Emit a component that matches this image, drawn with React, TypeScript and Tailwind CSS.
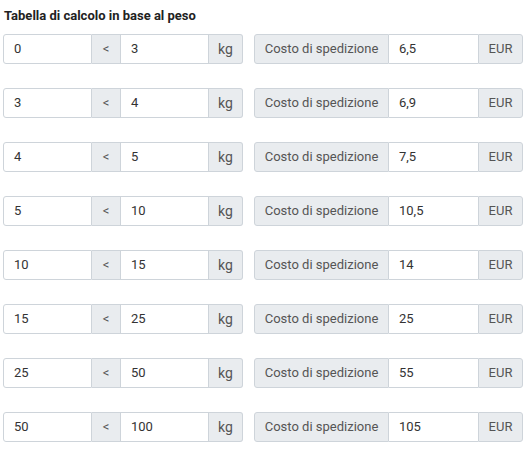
const rows = [
  { from: "0", to: "3", cost: "6,5" },
  { from: "3", to: "4", cost: "6,9" },
  { from: "4", to: "5", cost: "7,5" },
  { from: "5", to: "10", cost: "10,5" },
  { from: "10", to: "15", cost: "14" },
  { from: "15", to: "25", cost: "25" },
  { from: "25", to: "50", cost: "55" },
  { from: "50", to: "100", cost: "105" },
];

const Addon = ({ children, className = "" }: { children: React.ReactNode; className?: string }) => (
  <div className={`flex items-center justify-center bg-[#e9ecef] text-[#555] border-[#ced4da] ${className}`}>{children}</div>
);

const Field = ({ value, className = "" }: { value: string; className?: string }) => (
  <div className={`flex items-center w-[89px] pl-[10px] bg-white text-[#333] border-[#ced4da] ${className}`}>{value}</div>
);

export default function App() {
  return (
    <div className="font-['Roboto',sans-serif] text-[13px] pl-[3px] pt-[8px]">
      <h2 className="font-bold text-[13px] text-[#222] pl-[1px] leading-[16px]">Tabella di calcolo in base al peso</h2>
      <div className="flex flex-col gap-[24px] mt-[10px]">
        {rows.map((r) => (
          <div key={r.from} className="flex gap-[11px] h-[30px]">
            {/* peso */}
            <div className="flex w-[240px]">
              <Field value={r.from} className="border rounded-l-[3px]" />
              <Addon className="w-[28px] border-y">&lt;</Addon>
              <Field value={r.to} className="border" />
              <Addon className="w-[34px] border-y border-r rounded-r-[3px] text-[14px]">kg</Addon>
            </div>
            {/* costo */}
            <div className="flex w-[269px]">
              <Addon className="w-[135px] border rounded-l-[3px]">Costo di spedizione</Addon>
              <Field value={r.cost} className="border-y" />
              <Addon className="w-[45px] border rounded-r-[3px]">EUR</Addon>
            </div>
          </div>
        ))}
      </div>
    </div>
  );
}
